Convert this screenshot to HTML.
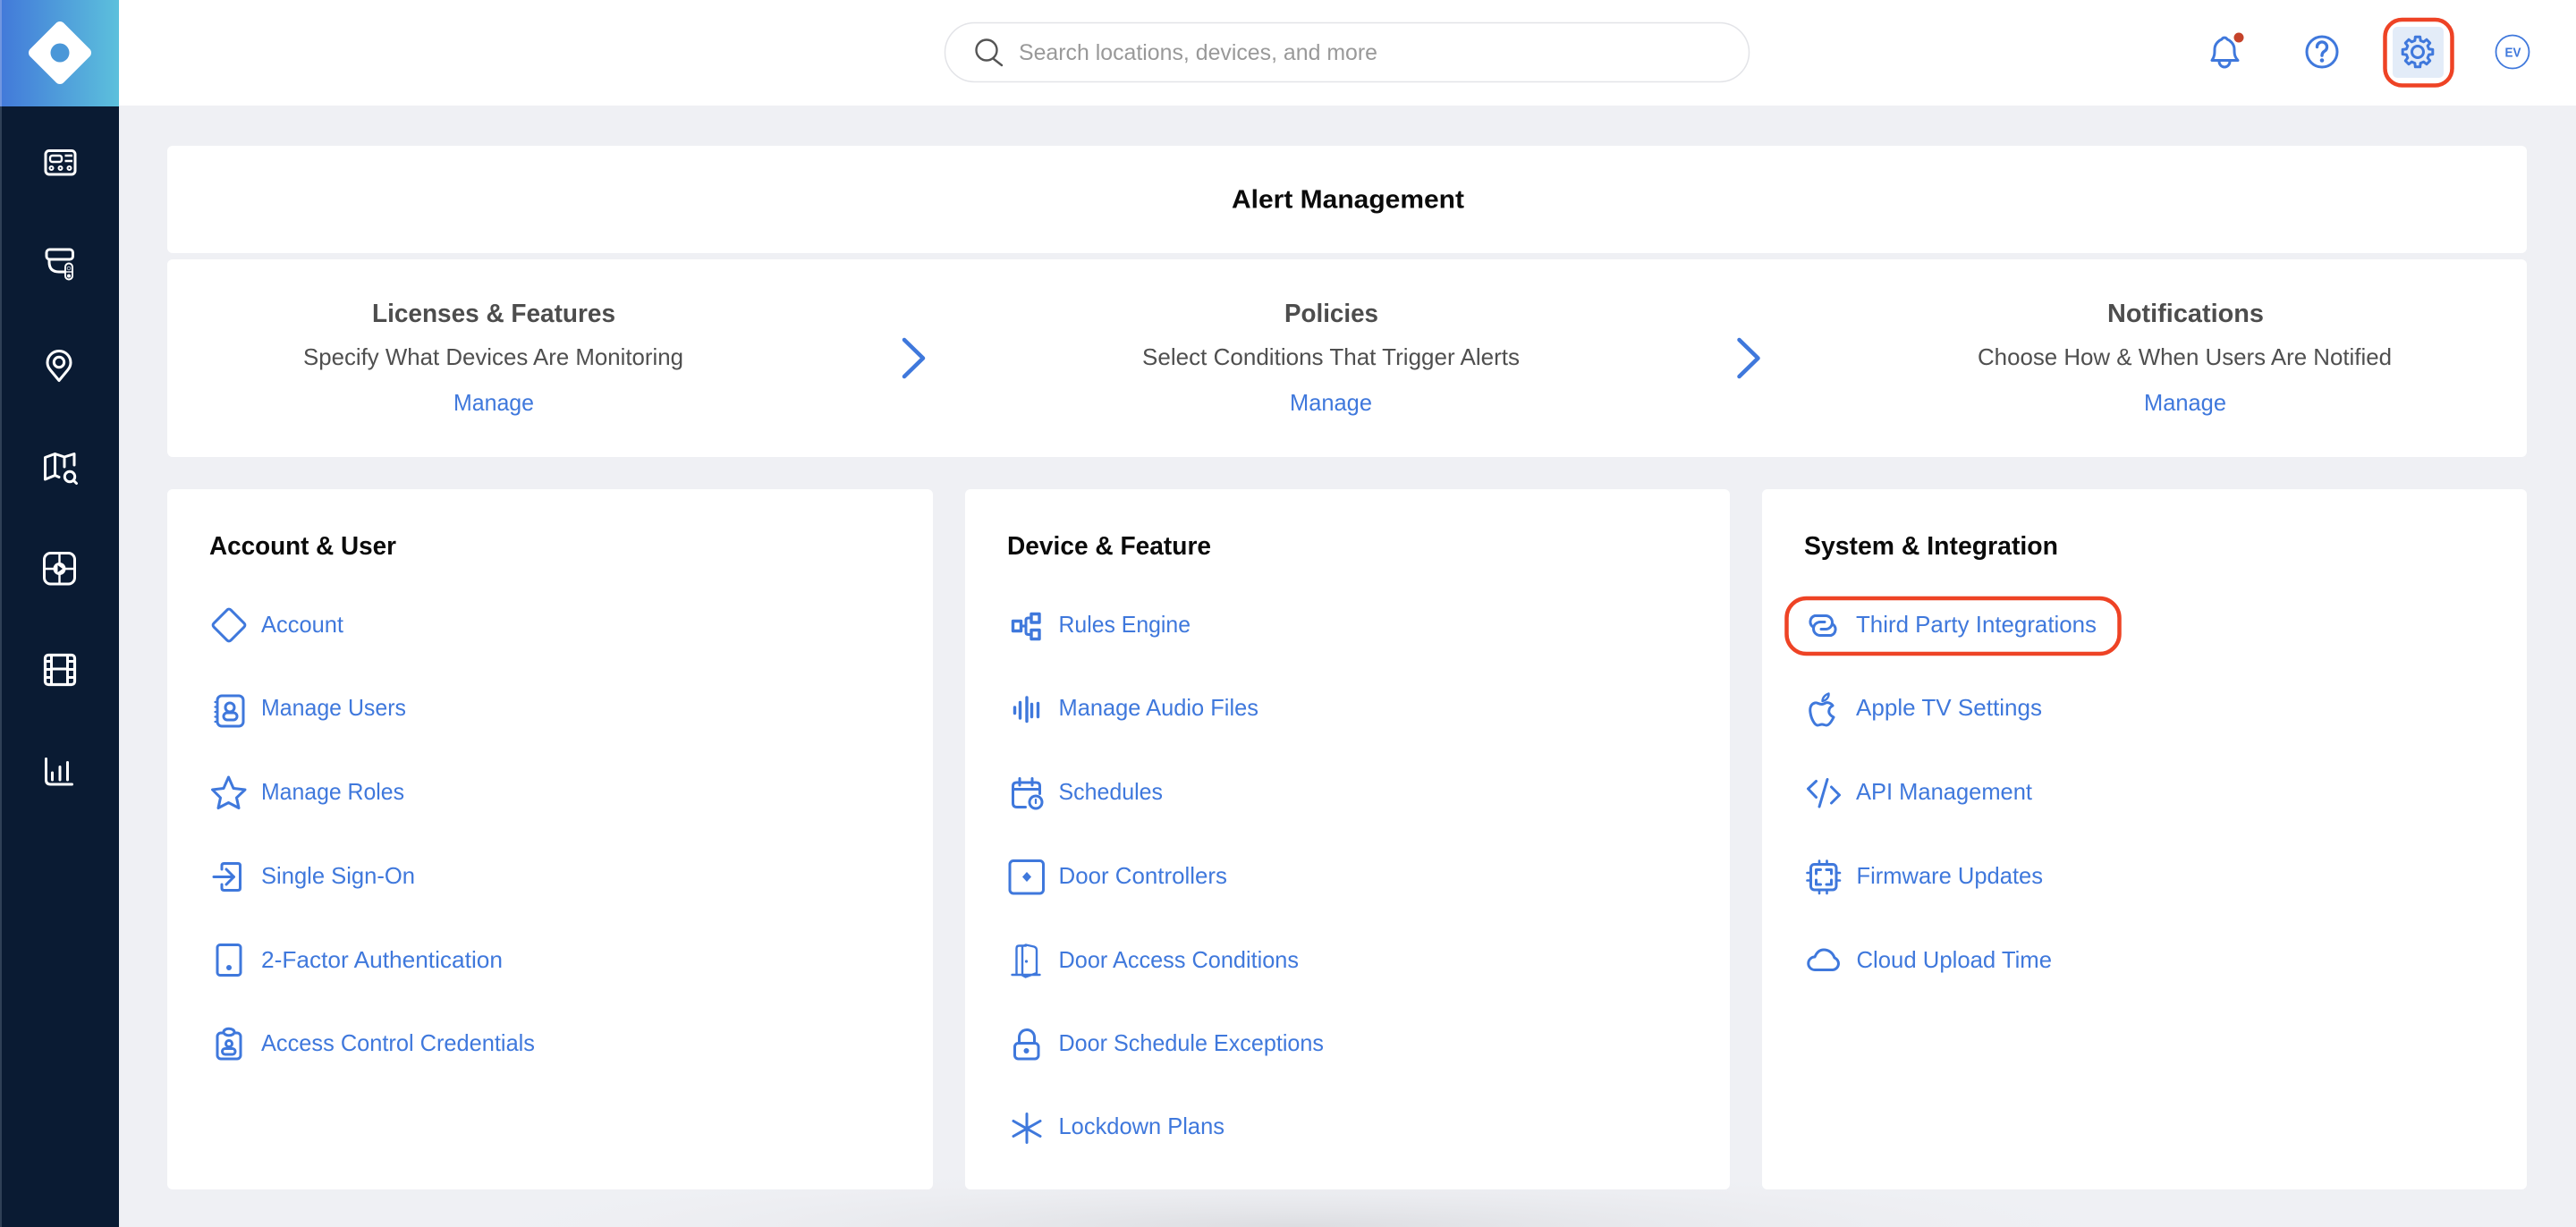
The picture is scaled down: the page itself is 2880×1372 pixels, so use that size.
<!DOCTYPE html>
<html lang="en">
<head>
<meta charset="utf-8">
<title>Alert Management</title>
<style>
html,body{margin:0;padding:0;background:#eff0f4;width:2880px;height:1372px;overflow:hidden}
svg{display:block}
text{font-family:"Liberation Sans",sans-serif}
.l{font-size:26px;fill:#3f78dc}
.h{font-size:29px;font-weight:bold;fill:#0b0b0b}
.t{font-size:29px;font-weight:bold;fill:#4d4d4d}
.d{font-size:26px;fill:#4f4f4f}
.i{fill:none;stroke:#3f78dc;stroke-width:3;stroke-linecap:round;stroke-linejoin:round}
.w{fill:none;stroke:#fff;stroke-width:3;stroke-linecap:round;stroke-linejoin:round}
.f{fill:#3f78dc;stroke:none}
</style>
</head>
<body>
<svg xmlns="http://www.w3.org/2000/svg" width="2880" height="1372" viewBox="0 0 2880 1372">
<defs>
<linearGradient id="lg" x1="0" y1="0" x2="1" y2="0"><stop offset="0" stop-color="#4279d9"/><stop offset="1" stop-color="#5cc0dc"/></linearGradient>
<radialGradient id="sh" gradientUnits="userSpaceOnUse" cx="0" cy="0" r="1" gradientTransform="translate(1450 1372) scale(1000 70)"><stop offset="0" stop-color="#dcdde1"/><stop offset="1" stop-color="#eff0f4" stop-opacity="0"/></radialGradient>
</defs>
<rect width="2880" height="1372" fill="#eff0f4"/>
<rect x="450" y="1302" width="2000" height="70" fill="url(#sh)"/>

<!-- header -->
<rect width="2880" height="118" fill="#fff"/>
<rect x="1056.500" y="25.500" width="899" height="66" rx="33" fill="#fff" stroke="#e3e4e8" stroke-width="1.500"/>
<circle cx="1103" cy="56" r="11.500" fill="none" stroke="#555" stroke-width="2.400"/>
<path d="M1111 66L1120 73" fill="none" stroke="#555" stroke-width="2.400" stroke-linecap="round"/>
<text x="1139" y="67" font-size="25" fill="#999" textLength="401" lengthAdjust="spacingAndGlyphs">Search locations, devices, and more</text>

<!-- bell -->
<path class="i" d="M2473 67.500H2502C2498 63 2498 60 2498 55C2498 49 2493 45 2490 44C2489 41.500 2485 41.500 2484 44C2481 45 2476 49 2476 55C2476 60 2476 63 2473 67.500Z"/>
<path class="i" d="M2481 68.500a6 6.500 0 0 0 12 0"/>
<circle cx="2503" cy="42" r="5.500" fill="#c5432a"/>
<!-- help -->
<circle class="i" cx="2596" cy="58" r="17"/>
<path class="i" style="stroke-width:3.400" d="M2590.500 52.500a5.500 5.500 0 1 1 8.500 4.600q-3 1.900-3 5"/>
<circle class="f" cx="2596" cy="67.500" r="2.300"/>
<!-- settings -->
<rect x="2666.500" y="22" width="75" height="73.500" rx="19" fill="#fff" stroke="#ee4325" stroke-width="4.500"/>
<rect x="2675" y="30" width="57" height="57" rx="5" fill="#e3ecf8"/>
<g transform="translate(2703 58)">
<path class="i" d="M12.610-3.140L16.790-2.660L16.790 2.660L12.610 3.140L11.140 6.700L13.750 9.990L9.990 13.750L6.700 11.140L3.140 12.610L2.660 16.790L-2.660 16.790L-3.140 12.610L-6.700 11.140L-9.990 13.750L-13.750 9.990L-11.140 6.700L-12.610 3.140L-16.790 2.660L-16.790-2.660L-12.610-3.140L-11.140-6.700L-13.750-9.990L-9.990-13.750L-6.700-11.140L-3.140-12.610L-2.660-16.790L2.660-16.790L3.140-12.610L6.700-11.140L9.990-13.750L13.750-9.990L11.140-6.700Z"/>
<circle class="i" r="6.500"/>
</g>
<!-- avatar -->
<circle cx="2809" cy="58" r="18.500" fill="#fff" stroke="#3f78dc" stroke-width="1.800"/>
<text x="2800.500" y="63.500" font-size="15" font-weight="bold" fill="#3f78dc" textLength="18" lengthAdjust="spacingAndGlyphs">EV</text>

<!-- sidebar -->
<rect x="0" y="0" width="133" height="119" fill="url(#lg)"/>
<rect x="0" y="0" width="2" height="119" fill="#7296e0"/>
<rect x="0" y="119" width="133" height="1253" fill="#0a1b33"/>
<rect x="0" y="119" width="2" height="1253" fill="#2f4056"/>
<rect x="40.500" y="32.500" width="53" height="53" rx="6" transform="rotate(45 67 59)" fill="#fff"/>
<circle cx="67" cy="59" r="10.500" fill="#4a97d8"/>

<!-- icon 1 panel -->
<rect class="w" x="51" y="168.500" width="33" height="26.500" rx="4"/>
<rect x="56" y="174" width="13" height="7" rx="2.500" fill="none" stroke="#fff" stroke-width="2.400"/>
<path d="M72.500 174H81M72.500 180H81" stroke="#fff" stroke-width="2.400" fill="none"/>
<circle cx="57.500" cy="188" r="2" fill="none" stroke="#fff" stroke-width="2"/><circle cx="67.500" cy="188" r="2" fill="none" stroke="#fff" stroke-width="2"/><circle cx="77.500" cy="188" r="2" fill="none" stroke="#fff" stroke-width="2"/>
<!-- icon 2 camera -->
<rect class="w" x="52" y="279" width="29.500" height="11" rx="3.500"/>
<path class="w" d="M55 290V293Q55 304 66 304H72"/>
<rect x="73" y="294.500" width="8" height="18" rx="4" fill="none" stroke="#fff" stroke-width="2"/>
<path d="M73 304H81" stroke="#fff" stroke-width="1.400"/>
<circle cx="77" cy="300" r="1.800" fill="none" stroke="#b5bcc8" stroke-width="1"/>
<circle cx="77" cy="308.500" r="2" fill="#fff"/>
<!-- icon 3 pin -->
<path class="w" d="M66 425.500L56.500 414C53.500 410.500 53 408 53 405.500A13 13 0 0 1 79 405.500C79 408 78.500 410.500 75.500 414Z"/>
<circle class="w" cx="66" cy="405" r="5.700"/>
<!-- icon 4 map -->
<path class="w" d="M50.500 536V511.500L61.500 507.500L72 511L83 507.500V520M50.500 536L61.500 531.500L66 533.500M61.500 507.500V531.500M72 511V522"/>
<circle class="w" cx="78" cy="533" r="5.700"/>
<path class="w" d="M82.500 537.500L85.500 540.500"/>
<!-- icon 5 -->
<rect class="w" x="49.500" y="618.500" width="34" height="34.500" rx="7"/>
<path d="M66.500 618.500V653M49.500 636H84" stroke="#fff" stroke-width="2.400"/>
<circle cx="66.500" cy="636" r="7" fill="#fff"/>
<path d="M64.500 632L70 636L64.500 640Z" fill="#0a1b33"/>
<!-- icon 6 film -->
<rect x="50.500" y="732.500" width="33" height="33" rx="3.500" fill="none" stroke="#fff" stroke-width="3.200"/>
<path d="M57.500 733V765M75.500 733V765M51 739.500H57.500M51 748.500H57.500M51 757.500H57.500M75.500 739.500H83M75.500 748.500H83M75.500 757.500H83M57.500 748H75.500" stroke="#fff" stroke-width="3" fill="none"/>
<!-- icon 7 chart -->
<path class="w" d="M51.500 848.500V872Q51.500 877 56.500 877H80.500"/>
<path d="M58.500 864V872M67 857.500V872M75.500 852.500V872" stroke="#fff" stroke-width="3" stroke-linecap="round" fill="none"/>

<!-- top cards -->
<rect x="187" y="163" width="2638" height="120" rx="6" fill="#fff"/>
<rect x="187" y="290" width="2638" height="221" rx="6" fill="#fff"/>
<text x="1377" y="232.500" class="h" font-size="29" textLength="260" lengthAdjust="spacingAndGlyphs">Alert Management</text>

<text x="416" y="360" class="t" textLength="272" lengthAdjust="spacingAndGlyphs">Licenses &amp; Features</text>
<text x="339" y="408" class="d" textLength="425" lengthAdjust="spacingAndGlyphs">Specify What Devices Are Monitoring</text>
<text x="507" y="459" class="l" textLength="90" lengthAdjust="spacingAndGlyphs">Manage</text>

<text x="1436" y="360" class="t" textLength="105" lengthAdjust="spacingAndGlyphs">Policies</text>
<text x="1277" y="408" class="d" textLength="422" lengthAdjust="spacingAndGlyphs">Select Conditions That Trigger Alerts</text>
<text x="1442" y="459" class="l" textLength="92" lengthAdjust="spacingAndGlyphs">Manage</text>

<text x="2356" y="360" class="t" textLength="175" lengthAdjust="spacingAndGlyphs">Notifications</text>
<text x="2211" y="408" class="d" textLength="463" lengthAdjust="spacingAndGlyphs">Choose How &amp; When Users Are Notified</text>
<text x="2397" y="459" class="l" textLength="92" lengthAdjust="spacingAndGlyphs">Manage</text>

<path d="M1011 380L1032 400.500L1011 421" fill="none" stroke="#3f78dc" stroke-width="4.500" stroke-linecap="round" stroke-linejoin="round"/>
<path d="M1944.500 380L1965.500 400.500L1944.500 421" fill="none" stroke="#3f78dc" stroke-width="4.500" stroke-linecap="round" stroke-linejoin="round"/>

<!-- columns -->
<rect x="187" y="547" width="856" height="783" rx="6" fill="#fff"/>
<rect x="1079" y="547" width="855" height="783" rx="6" fill="#fff"/>
<rect x="1970" y="547" width="855" height="783" rx="6" fill="#fff"/>

<text x="234" y="620" class="h" textLength="209" lengthAdjust="spacingAndGlyphs">Account &amp; User</text>
<text x="1126" y="620" class="h" textLength="228" lengthAdjust="spacingAndGlyphs">Device &amp; Feature</text>
<text x="2017" y="620" class="h" textLength="284" lengthAdjust="spacingAndGlyphs">System &amp; Integration</text>

<!-- col 1 text -->
<text x="292" y="707" class="l" textLength="92" lengthAdjust="spacingAndGlyphs">Account</text>
<text x="292" y="800" class="l" textLength="162" lengthAdjust="spacingAndGlyphs">Manage Users</text>
<text x="292" y="894" class="l" textLength="160" lengthAdjust="spacingAndGlyphs">Manage Roles</text>
<text x="292" y="988" class="l" textLength="172" lengthAdjust="spacingAndGlyphs">Single Sign-On</text>
<text x="292" y="1082" class="l" textLength="270" lengthAdjust="spacingAndGlyphs">2-Factor Authentication</text>
<text x="292" y="1175" class="l" textLength="306" lengthAdjust="spacingAndGlyphs">Access Control Credentials</text>

<!-- col 2 text -->
<text x="1183.500" y="707" class="l" textLength="147.500" lengthAdjust="spacingAndGlyphs">Rules Engine</text>
<text x="1183.500" y="800" class="l" textLength="223.500" lengthAdjust="spacingAndGlyphs">Manage Audio Files</text>
<text x="1183.500" y="894" class="l" textLength="116.500" lengthAdjust="spacingAndGlyphs">Schedules</text>
<text x="1183.500" y="988" class="l" textLength="188.500" lengthAdjust="spacingAndGlyphs">Door Controllers</text>
<text x="1183.500" y="1082" class="l" textLength="268.500" lengthAdjust="spacingAndGlyphs">Door Access Conditions</text>
<text x="1183.500" y="1175" class="l" textLength="296.500" lengthAdjust="spacingAndGlyphs">Door Schedule Exceptions</text>
<text x="1183.500" y="1268" class="l" textLength="185.500" lengthAdjust="spacingAndGlyphs">Lockdown Plans</text>

<!-- col 3 text -->
<text x="2075" y="707" class="l" textLength="269" lengthAdjust="spacingAndGlyphs">Third Party Integrations</text>
<text x="2075" y="800" class="l" textLength="208" lengthAdjust="spacingAndGlyphs">Apple TV Settings</text>
<text x="2075" y="894" class="l" textLength="197" lengthAdjust="spacingAndGlyphs">API Management</text>
<text x="2075.500" y="988" class="l" textLength="208.500" lengthAdjust="spacingAndGlyphs">Firmware Updates</text>
<text x="2075.500" y="1082" class="l" textLength="218.500" lengthAdjust="spacingAndGlyphs">Cloud Upload Time</text>

<!-- highlight -->
<rect x="1997.500" y="669" width="372" height="62" rx="22" fill="none" stroke="#ee4325" stroke-width="4.500"/>

<!-- col 1 icons -->
<rect class="i" x="242.500" y="685.500" width="27" height="27" rx="3" transform="rotate(45 256 699)"/>
<rect class="i" x="243" y="778" width="29" height="34" rx="5"/>
<path class="i" style="stroke-width:2.200" d="M240.500 785H243M240.500 790.500H243M240.500 796H243M240.500 801.500H243M240.500 807H243"/>
<circle class="i" cx="257" cy="791" r="5"/>
<rect class="i" x="250" y="797" width="15" height="8" rx="4"/>
<path class="i" d="M255.500 869L261 881.500L274 883L264.500 892L267 903.500L255.500 897.500L244 903.500L246.500 892L237.500 883L250 881.500Z"/>
<path class="i" d="M248 972V968Q248 965.500 250.500 965.500H266Q268.500 965.500 268.500 968V993Q268.500 995.500 266 995.500H250.500Q248 995.500 248 993V989"/>
<path class="i" d="M239 980.500H261.500M253 972L261.500 980.500L253 989"/>
<rect class="i" x="243" y="1056.500" width="26" height="34" rx="3"/>
<circle class="f" cx="256" cy="1082" r="3"/>
<rect class="i" x="243" y="1155" width="26" height="29" rx="4"/>
<ellipse cx="256" cy="1154" rx="6" ry="3.800" fill="#fff" stroke="#3f78dc" stroke-width="3"/>
<circle class="i" cx="256" cy="1167" r="3.500"/>
<rect class="i" x="248.500" y="1172.500" width="14.500" height="6.500" rx="3.200"/>

<!-- col 2 icons -->
<rect class="i" x="1132.500" y="694.500" width="9" height="11" style="stroke-width:3.400"/>
<rect class="i" x="1153" y="686.500" width="9" height="9.500" style="stroke-width:3.400"/>
<rect class="i" x="1153" y="704.500" width="9" height="10" style="stroke-width:3.400"/>
<path class="i" d="M1141.500 700H1147M1153 691H1149.500Q1147 691 1147 693.500V707Q1147 709.500 1149.500 709.500H1153"/>
<path class="i" style="stroke-width:3.400" d="M1134.500 791V797.500M1140.500 785.500V803M1148 780V806.500M1153.500 787.500V801.500M1160.500 786.500V801.500"/>
<path class="i" d="M1146.500 902.500H1137Q1132.500 902.500 1132.500 898V879Q1132.500 875 1137 875H1158Q1162.500 875 1162.500 879V887.500M1133 882.500H1162M1140 870.500V878M1154 870.500V878"/>
<circle class="i" cx="1158" cy="897" r="7"/>
<path class="i" style="stroke-width:2.200" d="M1158 894V898"/>
<rect class="i" x="1129" y="962.500" width="37.500" height="36.500" rx="4"/>
<path class="f" d="M1148 975L1153 980.500L1148 986L1143 980.500Z"/>
<path class="i" style="stroke-width:2.400" d="M1131.500 1090H1162.500M1136.500 1090V1060.500Q1136.500 1057.500 1139.500 1057.500H1147M1143 1090.500V1058L1147 1056.500L1156 1058.500Q1159 1059.500 1159 1062.500V1088L1146.500 1092.500L1143 1090.500"/>
<circle class="f" cx="1147.500" cy="1075" r="1.600"/>
<rect class="i" x="1134.500" y="1166.500" width="26.500" height="17.500" rx="4"/>
<path class="i" d="M1139.500 1166V1160A8.500 8.500 0 0 1 1156.500 1160V1166"/>
<circle class="f" cx="1147.500" cy="1175" r="3"/>
<path class="i" d="M1148 1245.500V1277.500M1133 1253.500L1163 1270.500M1163 1253.500L1133 1270.500"/>
<circle class="f" cx="1148" cy="1262" r="2.500"/>

<!-- col 3 icons -->
<path class="i" d="M2027 701A7 7 0 0 1 2029 688.500H2041A7.500 7.500 0 0 1 2041 703.500H2036"/>
<path class="i" d="M2049 698A7 7 0 0 1 2047 710.500H2035A7.500 7.500 0 0 1 2035 695.500H2040"/>
<path class="i" d="M2037 787.500C2033 787.500 2031 785 2029 786C2025 787 2023 791 2024 797C2025 804 2029 811 2032 811C2034 811 2035 810 2037 810C2039 810 2040 811 2042 811C2045 811 2048 806 2050 802C2046 800 2044 797 2045 794C2045 792 2047 790 2049 789C2047 786 2043 785 2041 786C2039 787 2038 787.500 2037 787.500Z"/>
<path class="i" style="stroke-width:2.400" d="M2037.500 784C2037.500 780.500 2040 777 2044.500 775.500C2045 779.500 2042 783 2037.500 784Z"/>
<path class="i" d="M2030.500 873.500L2021.500 882L2030.500 891.500M2043 871.500L2034 902M2047.500 880L2056.500 889L2047.500 898"/>
<rect class="i" x="2024.500" y="966.500" width="28.500" height="28.500" rx="4"/>
<path class="i" style="stroke-width:2.600" d="M2034 962.500V966M2042.500 962.500V966M2034 995.500V999M2042.500 995.500V999M2020.500 976H2024M2020.500 984.500H2024M2053.500 976H2057M2053.500 984.500H2057"/>
<path class="i" d="M2030.500 977V972.500H2035.500M2042 972.500H2047.500V977M2047.500 984V989H2042M2035.500 989H2030.500V984"/>
<path class="i" d="M2029 1084.500H2049A7 7 0 0 0 2051 1071C2049 1065 2044 1062 2039 1062C2034 1062 2031 1065 2029 1070A7.200 7.200 0 0 0 2029 1084.500Z"/>
</svg>
</body>
</html>
